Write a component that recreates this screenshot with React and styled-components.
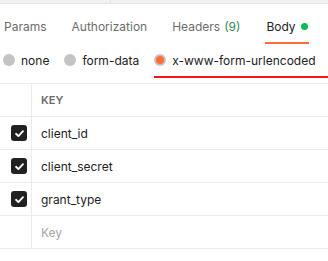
import styled, { createGlobalStyle } from "styled-components";

const Global = createGlobalStyle`
  body {
    margin: 0;
    background: #ffffff;
    font-family: Inter, "Noto Sans", sans-serif;
  }
`;

const Page = styled.div`
  width: 328px;
  height: 261px;
  overflow: hidden;
  background: #fff;
`;

const TopStrip = styled.div`
  height: 3px;
  background: #f2f2f2;
  border-bottom: 1px solid #e3e3e3;
  display: flex;
`;

const StripCell = styled.div`
  width: ${(p) => p.w}px;
  border-right: 1px solid #e0e0e0;
`;

const Tabs = styled.div`
  display: flex;
  gap: 25px;
  padding: 0 0 0 4px;
  height: 40px;
  align-items: stretch;
`;

const Tab = styled.div`
  display: flex;
  align-items: center;
  gap: 4px;
  font-size: 12px;
  color: ${(p) => (p.active ? "#212121" : "#6b6b6b")};
  padding: 7px ${(p) => (p.active ? "1px" : "0")} 0;
  box-sizing: border-box;
  border-bottom: 2px solid ${(p) => (p.active ? "#ff6c37" : "transparent")};
`;

const Count = styled.span`
  color: #2f8a57;
`;

const Dot = styled.span`
  width: 7px;
  height: 7px;
  border-radius: 50%;
  background: #0cbb52;
  margin-left: 1px;
`;

const Radios = styled.div`
  display: flex;
  gap: 15px;
  padding-left: 3px;
  height: 39px;
  align-items: flex-start;
  border-bottom: 1px solid #ebebeb;
`;

const RadioItem = styled.label`
  display: flex;
  align-items: center;
  gap: 6px;
  height: 34px;
  font-size: 12px;
  color: #212121;
  white-space: nowrap;
  box-sizing: border-box;
  border-bottom: 2px solid ${(p) => (p.marked ? "#f21818" : "transparent")};
  flex: ${(p) => (p.marked ? 1 : "none")};
`;

const Circle = styled.span`
  width: 12px;
  height: 12px;
  border-radius: 50%;
  box-sizing: border-box;
  background: ${(p) => (p.checked ? "#ff6c37" : "#c4c4c4")};
  border: ${(p) => (p.checked ? "2px solid #c4c4c4" : "none")};
`;

const Table = styled.div`
  display: grid;
  grid-template-columns: 32px 1fr;
`;

const Cell = styled.div`
  height: 32px;
  border-bottom: 1px solid #ebebeb;
  display: flex;
  align-items: center;
  font-size: 12px;
  color: ${(p) => (p.muted ? "#a6a6a6" : "#212121")};
  padding-left: ${(p) => (p.first ? 0 : 9)}px;
  border-right: ${(p) => (p.first ? "1px solid #ebebeb" : "none")};
`;

const HeadLabel = styled.span`
  font-size: 11px;
  font-weight: 600;
  color: #6b6b6b;
`;

const Box = styled.span`
  width: 16px;
  height: 16px;
  border-radius: 3px;
  background: #212121;
  display: flex;
  align-items: center;
  justify-content: center;
  margin-left: 11px;
`;

function Check() {
  return (
    <Box>
      <svg width="11" height="11" viewBox="0 0 12 12">
        <path
          d="M2.2 6.3 L4.8 8.8 L9.8 3.4"
          fill="none"
          stroke="#fff"
          strokeWidth="2"
          strokeLinecap="round"
          strokeLinejoin="round"
        />
      </svg>
    </Box>
  );
}

const rows = ["client_id", "client_secret", "grant_type"];

export default function App() {
  return (
    <Page>
      <Global />
      <TopStrip>
        <StripCell w={110} />
      </TopStrip>
      <Tabs>
        <Tab>Params</Tab>
        <Tab>Authorization</Tab>
        <Tab>
          Headers <Count>(9)</Count>
        </Tab>
        <Tab active>
          Body <Dot />
        </Tab>
      </Tabs>
      <Radios>
        <RadioItem>
          <Circle /> none
        </RadioItem>
        <RadioItem>
          <Circle /> form-data
        </RadioItem>
        <RadioItem marked>
          <Circle checked /> x-www-form-urlencoded
        </RadioItem>
      </Radios>
      <Table>
        <Cell first />
        <Cell>
          <HeadLabel>KEY</HeadLabel>
        </Cell>
        {rows.map((r) => [
          <Cell first key={r + "c"}>
            <Check />
          </Cell>,
          <Cell key={r}>{r}</Cell>,
        ])}
        <Cell first />
        <Cell muted>Key</Cell>
      </Table>
    </Page>
  );
}
